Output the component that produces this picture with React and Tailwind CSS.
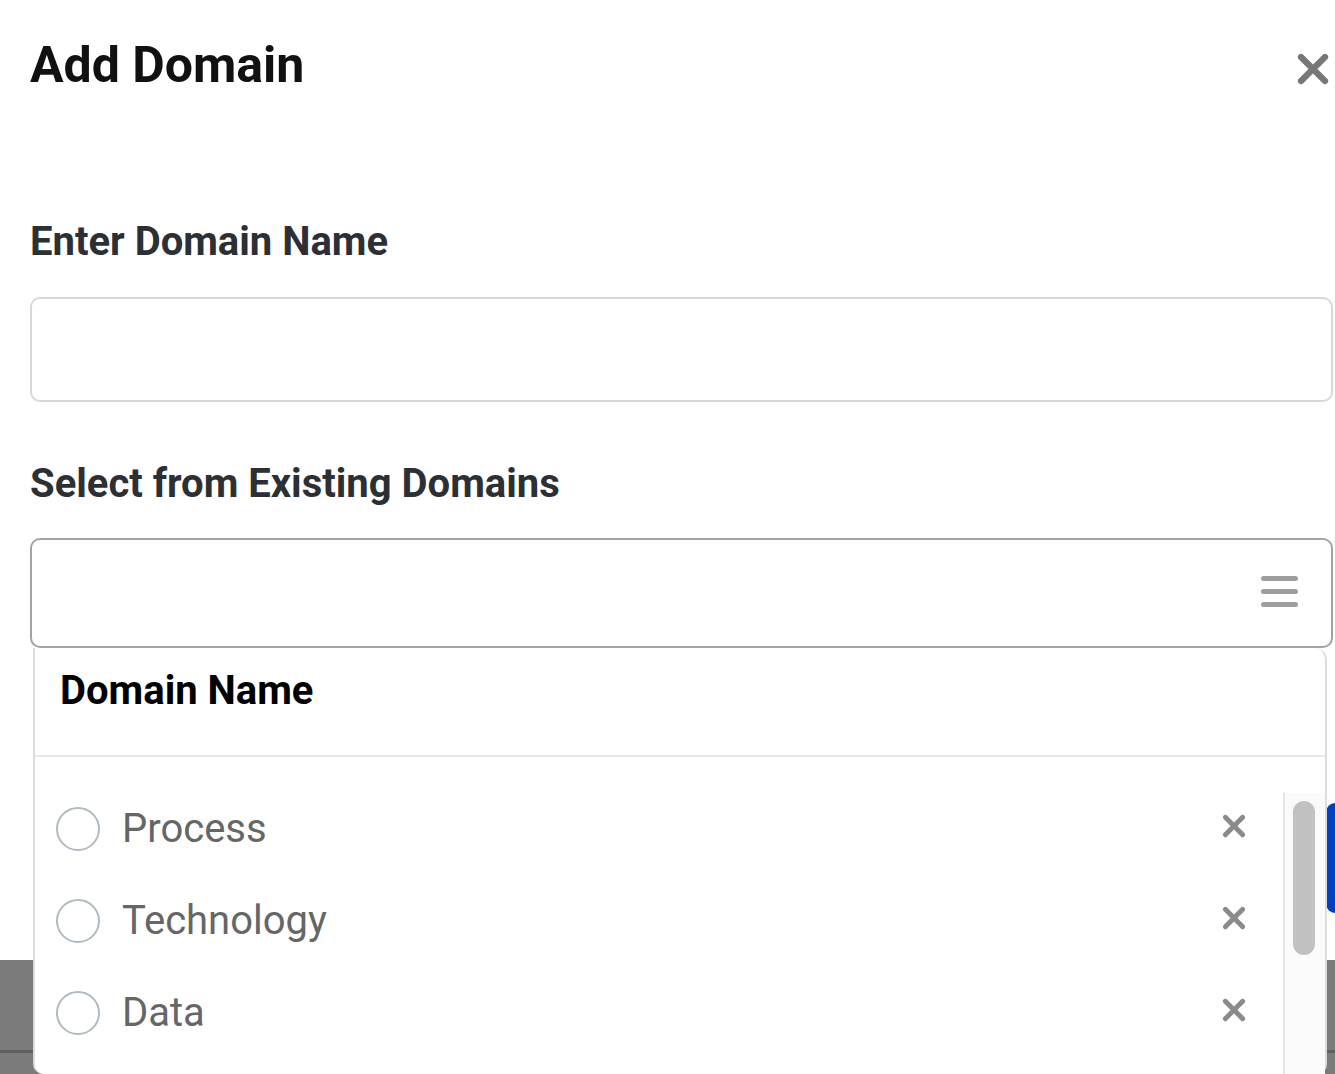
import React from 'react';

const domains = ['Process', 'Technology', 'Data'];

function CrossIcon({ size, stroke, color }) {
  return (
    <svg width={size} height={size} viewBox="0 0 24 24" fill="none">
      <path d="M4 4L20 20M20 4L4 20" stroke={color} strokeWidth={stroke} strokeLinecap="round" />
    </svg>
  );
}

function DomainRow({ name }) {
  return (
    <div className="h-[66px] flex items-center">
      <span className="w-[44px] h-[44px] rounded-full border-2 border-[#b0bac4] ml-[21px] shrink-0"></span>
      <span className="ml-[22px] flex-1 text-[40px] leading-[48px] text-[#666666]">{name}</span>
      <span className="mr-[36px] mb-[6px] flex items-center">
        <CrossIcon size={26} stroke={4.5} color="#8a8a8a" />
      </span>
    </div>
  );
}

export default function App() {
  return (
    <div className="relative w-[1335px] h-[1074px] overflow-hidden bg-white font-['Roboto',sans-serif]">
      <div className="pl-[30px] pr-[2px]">
        {/* header */}
        <div className="flex items-start justify-between pt-[36px]">
          <h1 className="text-[50px] leading-[58px] font-bold text-[#111111]">Add Domain</h1>
          <button className="mt-[15px] mr-[2px]">
            <CrossIcon size={36} stroke={4.2} color="#777777" />
          </button>
        </div>

        <label className="block mt-[124px] text-[40px] leading-[48px] font-bold text-[#2c3034]">Enter Domain Name</label>
        <input className="block mt-[31px] w-full h-[105px] rounded-[10px] border-2 border-[#d5d9de] bg-white outline-none" />

        <label className="block mt-[58px] text-[40px] leading-[48px] font-bold text-[#2c3034]">Select from Existing Domains</label>
        <div className="relative mt-[30px]">
          <div className="h-[110px] rounded-[10px] border-2 border-[#a3a3a3] flex items-center justify-end pr-[33px] pb-[3px]">
            <div className="flex flex-col gap-[8px] w-[37px]">
              <span className="h-[5px] rounded-full bg-[#9e9e9e]"></span>
              <span className="h-[5px] rounded-full bg-[#9e9e9e]"></span>
              <span className="h-[5px] rounded-full bg-[#9e9e9e]"></span>
            </div>
          </div>

          {/* dropdown menu */}
          <div className="absolute top-full left-[3px] right-[6px] z-10 h-[426px] bg-white border-x-2 border-[#dcdcdc] rounded-tr-[12px] rounded-b-[10px] flex flex-col">
            <div className="h-[109px] pt-[19px] pl-[25px] border-b-2 border-[#e8e8e8]">
              <span className="text-[40px] leading-[48px] font-bold text-black">Domain Name</span>
            </div>
            <div className="flex-1 flex mt-[36px] min-h-0">
              <div className="flex-1 flex flex-col gap-[26px] pt-[3px]">
                {domains.map((d) => (
                  <DomainRow key={d} name={d} />
                ))}
              </div>
              <div className="w-[42px] bg-[#fafafa] border-l-2 border-[#e6e6e6] pt-[8px] pl-[8px]">
                <div className="w-[22px] h-[154px] rounded-full bg-[#c1c1c1]"></div>
              </div>
            </div>
          </div>
        </div>

        {/* content behind the menu */}
        <div className="flex justify-end mt-[155px] -mr-[2px]">
          <button className="w-[9px] h-[110px] rounded-l-[12px] bg-[#0040c4]"></button>
        </div>
      </div>

      <div className="mt-[47px] h-[120px] bg-[#7b7b7b] flex flex-col">
        <div className="h-[90px]"></div>
        <div className="h-[3px] bg-[#5f5f5f]"></div>
      </div>
    </div>
  );
}
